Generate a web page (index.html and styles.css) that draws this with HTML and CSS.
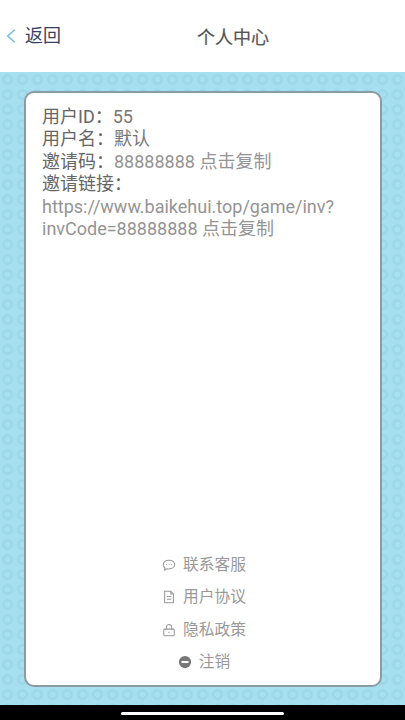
FILE: index.html
```html
<!DOCTYPE html>
<html lang="zh-CN">
<head>
<meta charset="utf-8">
<title>个人中心</title>
<link rel="stylesheet" href="styles.css">
</head>
<body>
<div class="screen">
  <span class="status-dot"></span>
  <header class="topbar">
    <div class="back">
      <svg class="back-icon" viewBox="0 0 12 18"><path d="M10.5 1.5 2 9l8.500 7.500"/></svg>
      <span>返回</span>
    </div>
    <h1 class="title">个人中心</h1>
  </header>
  <main class="pattern">
    <section class="card">
      <div class="info">
        <p class="line dark">用户ID：<span class="mid">55</span></p>
        <p class="line dark">用户名：<span class="mid">默认</span></p>
        <p class="line dark">邀请码：<span class="light">88888888 点击复制</span></p>
        <p class="line dark">邀请链接：</p>
        <p class="line light link">https://www.baikehui.top/game/inv?<br>invCode=88888888 点击复制</p>
      </div>
      <nav class="menu">
        <a class="item">
          <svg class="ico" viewBox="0 0 16 16"><path d="M8 2.500c3.800 0 6.500 2.200 6.500 5s-2.700 5-6.500 5c-.8 0-1.500-.1-2.200-.3L3 14l.3-2.700C2.200 10.400 1.500 9 1.500 7.500c0-2.800 2.700-5 6.500-5z"/><path class="dots" d="M5 7.500h.8M7.700 7.500h.8M10.400 7.500h.8"/></svg>
          <span>联系客服</span>
        </a>
        <a class="item">
          <svg class="ico" viewBox="0 0 16 16"><path d="M3 1.500h7l3 3v10H3z"/><path d="M10 1.500v3h3M5.500 7.500h5M5.500 10.500h5"/></svg>
          <span>用户协议</span>
        </a>
        <a class="item">
          <svg class="ico" viewBox="0 0 16 16"><rect x="2" y="7" width="12" height="7.500" rx="1"/><path d="M5 7V4.800a3 3 0 0 1 6 0V7M8 10v1.500"/></svg>
          <span>隐私政策</span>
        </a>
        <a class="item">
          <svg class="ico solid" viewBox="0 0 16 16"><circle cx="8" cy="8" r="7"/><rect class="bar" x="4" y="6.800" width="8" height="2.400"/></svg>
          <span>注销</span>
        </a>
      </nav>
    </section>
  </main>
  <footer class="homebar"><span class="handle"></span></footer>
</div>
</body>
</html>
```
FILE: styles.css
```css
* { box-sizing: border-box; }
html, body { margin: 0; padding: 0; background: #000; }
body { font-family: Roboto, "Noto Sans CJK SC", "Liberation Sans", sans-serif; }
.screen {
  position: relative;
  width: 405px;
  height: 720px;
  display: flex;
  flex-direction: column;
  overflow: hidden;
}
.status-dot {
  position: absolute;
  left: 361px;
  top: 13px;
  width: 3px;
  height: 5px;
  background: #6b3a4e;
}
.topbar {
  height: 72px;
  flex: none;
  background: #fff;
  display: flex;
  align-items: center;
  justify-content: center;
  position: relative;
  padding-left: 61px;
  padding-bottom: 1px;
}
.back {
  position: absolute;
  left: 6px;
  top: 26px;
  display: flex;
  align-items: center;
  gap: 9px;
  font-size: 18px;
  line-height: 20px;
  color: #37415f;
}
.back-icon {
  width: 10px;
  height: 16px;
  fill: none;
  stroke: #7cc0dc;
  stroke-width: 2;
}
.title {
  margin: 0;
  font-size: 18px;
  font-weight: 400;
  color: #555;
  -webkit-text-stroke: 0.2px #555;
}
.pattern {
  flex: 1;
  padding: 19px 23px 18px 24px;
  display: flex;
  background-color: #a6dff0;
  background-image:
    radial-gradient(circle at center, transparent 2.500px, #9cd8ea 3.500px, #9cd8ea 4.500px, transparent 6.500px);
  background-size: 15px 15px;
}
.card {
  flex: 1;
  background: #fff;
  border: 2px solid #8a9ba3;
  border-radius: 10px;
  padding: 13px 16px;
  display: flex;
  flex-direction: column;
  justify-content: space-between;
}
.line {
  margin: 0;
  font-size: 18px;
  line-height: 22.400px;
  white-space: nowrap;
}
.dark { color: #666; }
.mid { color: #777; }
.light { color: #949494; }
.menu {
  display: flex;
  flex-direction: column;
  align-items: center;
  gap: 12.500px;
  padding-left: 2px;
}
.item {
  display: flex;
  align-items: center;
  gap: 7px;
  font-size: 15.750px;
  line-height: 20px;
  color: #999;
}
.ico {
  width: 14px;
  height: 14px;
  fill: none;
  stroke: #999;
  stroke-width: 1.200;
}
.ico.solid { fill: #777; stroke: none; }
.ico .bar { fill: #fff; }
.homebar {
  height: 15px;
  flex: none;
  background: #000;
  display: flex;
  justify-content: center;
  align-items: center;
}
.handle {
  width: 163px;
  height: 3px;
  margin-top: 1px;
  border-radius: 2px;
  background: #fff;
}
```
